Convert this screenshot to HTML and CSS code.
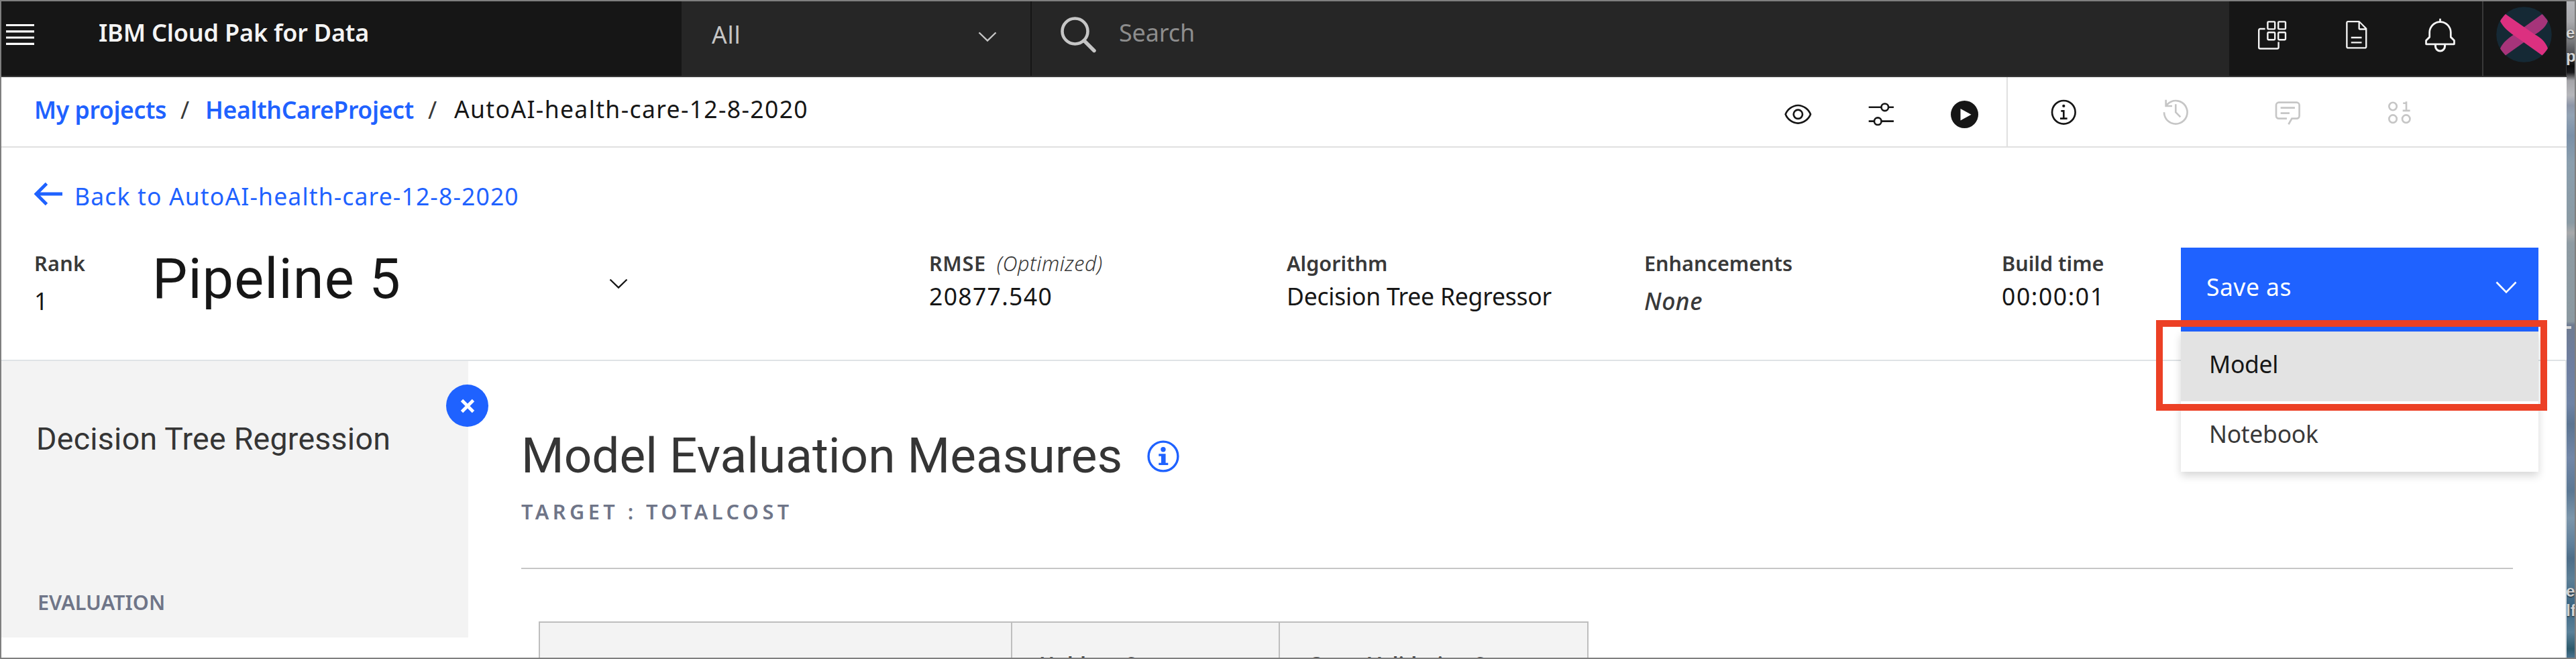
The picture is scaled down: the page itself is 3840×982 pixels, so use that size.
FILE: index.html
```html
<!DOCTYPE html>
<html lang="en">
<head>
<meta charset="utf-8">
<title>IBM Cloud Pak for Data</title>
<link rel="stylesheet" href="styles.css">
</head>
<body>
<div class="screen">
  <div class="window">
    <header class="topbar">
      <div class="brand">
        <svg class="hamburger" width="42" height="34" viewBox="0 0 42 34"><path d="M0 2.5h42M0 11.8h42M0 21h42M0 30.3h42" stroke="#fff" stroke-width="3.2"/></svg>
        <span class="brand-name">IBM Cloud Pak for Data</span>
      </div>
      <div class="scope">
        <span class="scope-label">All</span>
        <svg class="scope-chevron" width="28" height="16" viewBox="0 0 28 16"><path d="M1.5 1.5L14 13.5L26.5 1.5" fill="none" stroke="#c6c6c6" stroke-width="2.4"/></svg>
      </div>
      <div class="search">
        <svg class="search-icon" width="54" height="54" viewBox="0 0 54 54"><circle cx="21.5" cy="21.5" r="19" fill="none" stroke="#c6c6c6" stroke-width="4.6"/><path d="M35 35.5L50 50.5" stroke="#c6c6c6" stroke-width="5.4" stroke-linecap="round"/></svg>
        <span class="search-label">Search</span>
      </div>
      <div class="actions">
        <div class="action"><svg width="43" height="43" viewBox="0 0 43 43" fill="none" stroke="#f4f4f4" stroke-width="2.4"><path d="M10.6 12H3.2a2 2 0 0 0-2 2V39.5a2 2 0 0 0 2 2H28.6a2 2 0 0 0 2-2V31.5"/><rect x="14.4" y="1.4" width="10.8" height="11" rx="1.2"/><rect x="30.2" y="1.4" width="10.8" height="11" rx="1.2"/><rect x="14.4" y="17.2" width="10.8" height="11" rx="1.2"/><rect x="30.2" y="17.2" width="10.8" height="11" rx="1.2"/></svg></div>
        <div class="action"><svg width="47.6" height="47.6" viewBox="0 0 32 32" fill="#f4f4f4"><path d="M26.2 9.3l-7-7C19 2.1 18.8 2 18.5 2H7.5C6.4 2 5.5 2.9 5.5 4v24c0 1.1.9 2 2 2h17c1.1 0 2-.9 2-2V10c0-.3-.1-.5-.3-.7zM19.4 4.4l4.9 5.2h-4.9zM24.9 28.4H7.1V3.6h10.7v6c0 .9.7 1.6 1.6 1.6h5.5z"/><path d="M10.6 18h10.6v1.6H10.6zM10.6 23h10.6v1.6H10.6z"/></svg></div>
        <div class="action"><svg class="bell" width="55" height="55" viewBox="0 0 32 32" fill="#f4f4f4"><path d="M28.71 19.29L26 16.59V13a10 10 0 0 0-9.2-9.94V1h-1.6v2.06A10 10 0 0 0 6 13v3.59l-2.71 2.7A1 1 0 0 0 3 20v3a1 1 0 0 0 1 1h7v1a5 5 0 0 0 10 0v-1h7a1 1 0 0 0 1-1v-3a1 1 0 0 0-.29-.71zM19.2 25a3.2 3.2 0 0 1-6.4 0v-1h6.4zM27.4 22.4H4.6v-2l2.71-2.7A1 1 0 0 0 7.6 17v-4a8.4 8.4 0 0 1 16.8 0v4a1 1 0 0 0 .29.71l2.71 2.7z"/></svg></div>
      </div>
      <div class="account">
        <svg class="avatar" width="83" height="83" viewBox="0 0 83 83"><circle cx="41.5" cy="41.5" r="41.3" fill="#152935"/><path d="M68.5 11C71.5 14 74.5 17.5 77 21.5C74 30 67 36 57 42L14 72.5C11 69.5 8 66 6 62.3C10 53 18 47 27 41Z" fill="#a6347a"/><path d="M14 11C11 14 8 17.5 6 21.5C10 30 18 37 27 43L68.5 72.5C71.5 69.5 74.5 66 77 62C74 53 67 46 57 41Z" fill="#dc3080"/></svg>
      </div>
    </header>

    <nav class="crumbbar">
      <div class="crumbs">
        <a class="crumb link projects">My projects</a>
        <span class="slash">/</span>
        <a class="crumb link project">HealthCareProject</a>
        <span class="slash">/</span>
        <span class="crumb current">AutoAI-health-care-12-8-2020</span>
      </div>
      <div class="tools">
        <div class="tool"><svg class="low" width="42.6" height="42.6" viewBox="0 0 32 32"><path d="M30.94 15.66A16.69 16.69 0 0 0 16 5 16.69 16.69 0 0 0 1.06 15.66a1 1 0 0 0 0 .68A16.69 16.69 0 0 0 16 27 16.69 16.69 0 0 0 30.94 16.34a1 1 0 0 0 0-.68zM16 25c-5.3 0-10.9-3.93-12.93-9C5.1 10.93 10.7 7 16 7s10.9 3.93 12.93 9C26.9 21.07 21.3 25 16 25z"/><path d="M16 10a6 6 0 1 0 6 6 6 6 0 0 0-6-6zm0 10a4 4 0 1 1 4-4 4 4 0 0 1-4 4z"/></svg></div>
        <div class="tool"><svg class="low" width="42.6" height="42.6" viewBox="0 0 32 32" fill="none"><path d="M2 8.1h14M24.3 8.1H30M2 23.8h6M16.4 23.8H30" stroke="#161616" stroke-width="2"/><circle cx="20.1" cy="8.1" r="4" stroke="#161616" stroke-width="2"/><circle cx="12.2" cy="23.8" r="4" stroke="#161616" stroke-width="2"/></svg></div>
        <div class="tool"><svg class="low" width="41" height="41" viewBox="0 0 41 41"><circle cx="20.5" cy="20.5" r="20.5"/><path d="M14.5 12L30.5 20.7L14.5 29.5z" fill="#fff"/></svg></div>
      </div>
      <div class="panels">
        <div class="panel-tab"><svg width="42.6" height="42.6" viewBox="0 0 32 32"><path d="M17 22v-8.5h-4v2h2V22h-3v2h8v-2z"/><circle cx="16" cy="9" r="1.6"/><circle cx="16" cy="16" r="13" fill="none" stroke="#161616" stroke-width="2"/></svg></div>
        <div class="panel-tab"><svg class="off" width="42.6" height="42.6" viewBox="0 0 32 32"><path d="M20.59 22L15 16.41V7h2v8.58l5 5.01z"/><path d="M16 2A13.94 13.94 0 0 0 6 6.23V2H4v8h8V8H7.08A12 12 0 1 1 4 16H2A14 14 0 1 0 16 2z"/></svg></div>
        <div class="panel-tab"><svg class="off" width="42.6" height="42.6" viewBox="0 0 32 32"><path d="M17.74 30L16 29l4-7h6a2 2 0 0 0 2-2V8a2 2 0 0 0-2-2H6a2 2 0 0 0-2 2v12a2 2 0 0 0 2 2h9v2H6a4 4 0 0 1-4-4V8a4 4 0 0 1 4-4h20a4 4 0 0 1 4 4v12a4 4 0 0 1-4 4h-4.84z"/><path d="M8 10h16v2H8zM8 16h10v2H8z"/></svg></div>
        <div class="panel-tab"><svg class="off" width="42.6" height="42.6" viewBox="0 0 32 32"><g fill="none" stroke="#c6c6c6" stroke-width="2"><circle cx="8.3" cy="9.4" r="4.3"/><circle cx="8.3" cy="23.4" r="4.3"/><circle cx="23.1" cy="23.4" r="4.3"/></g><path d="M24.3 4v9.2h3.2v2h-8.2v-2h3V6.8h-2.6v-2h2.6V4z"/></svg></div>
      </div>
    </nav>

    <section class="summary">
      <a class="back">
        <svg width="42" height="34" viewBox="0 0 42 34"><path d="M18.5 1.5L3 17L18.5 32.5M3 17H42" fill="none" stroke="#1f62ff" stroke-width="4.8"/></svg>
        <span class="back-label">Back to AutoAI-health-care-12-8-2020</span>
      </a>
      <div class="metrics">
        <div class="metric"><div class="label rank-label">Rank</div><div class="value low-value">1</div></div>
        <div class="pipeline">
          <span class="pipeline-name">Pipeline 5</span>
          <svg class="pipeline-chevron" width="28" height="16" viewBox="0 0 28 16"><path d="M1.5 1.5L14 13.5L26.5 1.5" fill="none" stroke="#161616" stroke-width="2.4"/></svg>
        </div>
        <div class="metric"><div class="label rmse-label">RMSE<span class="note">(Optimized)</span></div><div class="value rmse-value">20877.540</div></div>
        <div class="metric"><div class="label">Algorithm</div><div class="value">Decision Tree Regressor</div></div>
        <div class="metric"><div class="label">Enhancements</div><div class="value low-value none">None</div></div>
        <div class="metric"><div class="label">Build time</div><div class="value time-value">00:00:01</div></div>
        <div class="save">
          <button class="save-button"><span>Save as</span><svg class="save-chevron" width="32" height="19" viewBox="0 0 32 19"><path d="M1.5 1.5L16 16.5L30.5 1.5" fill="none" stroke="#fff" stroke-width="2.6"/></svg></button>
          <div class="save-menu">
            <div class="save-item active">Model</div>
            <div class="save-item">Notebook</div>
          </div>
          <div class="highlight"></div>
        </div>
      </div>
    </section>

    <main class="body">
      <aside class="sidebar">
        <h2 class="side-title">Decision Tree Regression</h2>
        <div class="side-group">EVALUATION</div>
        <button class="close"><svg width="22" height="22" viewBox="0 0 22 22"><path d="M2.5 2.5L19.5 19.5M19.5 2.5L2.5 19.5" stroke="#fff" stroke-width="4.8"/></svg></button>
      </aside>
      <section class="content">
        <div class="heading">
          <h1 class="title">Model Evaluation Measures</h1>
          <svg class="title-info" width="48" height="48" viewBox="0 0 48 48" fill="#1f62ff"><circle cx="24" cy="24" r="21.9" fill="none" stroke="#1f62ff" stroke-width="3.4"/><circle cx="24" cy="13.7" r="3.7"/><path d="M17.3 20.3H27.6V33.7H31.3V37H17.3V33.7H21V23.7H17.3z"/></svg>
        </div>
        <div class="target">TARGET : TOTALCOST</div>
        <div class="rule"></div>
        <div class="scores">
          <div class="cell"></div>
          <div class="cell holdout">Holdout Score</div>
          <div class="cell cross">Cross Validation Score</div>
        </div>
      </section>
    </main>
  </div>
  <div class="desktop">
    <span class="desk-text d1">es</span>
    <span class="desk-text d2">py</span>
    <span class="dock"></span>
    <span class="desk-text d3">e</span>
    <span class="desk-text d4">lf</span>
  </div>
</div>
</body>
</html>
```
FILE: styles.css
```css
* { box-sizing: border-box; }
body { margin: 0; font-family: "Noto Sans", sans-serif; font-size: 35.5px; line-height: 40px; color: #161616; white-space: nowrap; }
svg { display: block; flex: none; }
h1, h2 { margin: 0; font-family: Roboto, sans-serif; font-weight: 400; }
button { margin: 0; border: 0; font: inherit; }

.screen { display: flex; width: 3840px; height: 982px; border: 2px solid #7f7f7f; overflow: hidden; background: #fff; }
.window { width: 3824px; flex: none; display: flex; flex-direction: column; }

/* Top bar */
.topbar { display: flex; height: 113px; flex: none; background: #161616; border-bottom: 2px solid #393939; border-right: 1px solid #393939; align-items: stretch; }
.brand { display: flex; align-items: flex-start; width: 1014px; padding-left: 7px; }
.hamburger { margin-top: 33px; }
.brand-name { margin: 27px 0 0 96px; font-size: 36px; font-weight: 600; letter-spacing: -.2px; color: #f4f4f4; }
.scope { display: flex; align-items: flex-start; width: 522px; padding-left: 45px; background: #262626; border-right: 2px solid #161616; color: #c6c6c6; }
.scope-label { width: 397px; margin-top: 29px; letter-spacing: .8px; }
.scope-chevron { margin-top: 45px; }
.search { display: flex; align-items: flex-start; flex: 1; padding-left: 43px; background: #262626; color: #8d8d8d; }
.search-icon { margin-top: 23px; }
.search-label { margin: 27px 0 0 33px; font-size: 36px; letter-spacing: -.16px; }
.actions { display: flex; width: 377px; padding-left: 2px; }
.action { display: flex; width: 125px; height: 100px; align-items: center; justify-content: center; }
.bell { margin-top: 2px; }
.account { width: 125px; padding: 8px 0 0 19px; border-left: 2px solid #393939; }

/* Breadcrumb bar */
.crumbbar { display: flex; height: 105px; flex: none; border-bottom: 2px solid #e0e0e0; }
.crumbs { display: flex; width: 2616px; padding: 28px 0 0 49px; }
.link { color: #1f62ff; font-weight: 600; }
.projects { width: 218px; letter-spacing: -.35px; }
.project { width: 332px; letter-spacing: -.3px; }
.slash { width: 37px; color: #393939; }
.slash + .current { padding-left: 2px; }
.current { letter-spacing: 1.37px; margin-top: -1px; }
.tools { display: flex; width: 373px; }
.tool, .panel-tab { display: flex; align-items: center; justify-content: center; width: 125px; height: 105px; fill: #161616; }
.low { margin-top: 5px; }
.panels { display: flex; border-left: 2px solid #e0e0e0; }
.panel-tab { width: 167px; height: 104px; }
.off { fill: #c6c6c6; }

/* Pipeline summary */
.summary { height: 318px; flex: none; padding: 52px 0 0 49px; border-bottom: 2px solid #dfe3e6; }
.back { display: flex; height: 40px; color: #1f62ff; }
.back-label { margin-left: 18px; letter-spacing: 1.15px; }
.metrics { display: grid; grid-template-columns: 176px 1158px 533px 533px 533px 267px 533px; margin-top: 57px; align-items: start; }
.metric { padding-top: 5px; }
.label { font-size: 30.6px; line-height: 36px; font-weight: 600; color: #393939; }
.rank-label { letter-spacing: .3px; }
.rmse-label { letter-spacing: .7px; }
.note { margin-left: 16px; font-weight: 300; font-style: italic; letter-spacing: .5px; }
.value { margin-top: 11px; letter-spacing: -.23px; }
.low-value { margin-top: 18px; }
.rmse-value { letter-spacing: 1.34px; }
.time-value { letter-spacing: 1.6px; }
.none { font-style: italic; font-weight: 500; letter-spacing: .5px; color: #393939; }
.pipeline { display: flex; align-items: flex-start; }
.pipeline-name { width: 681px; font-family: Roboto, sans-serif; font-size: 83px; line-height: 94px; letter-spacing: 1.04px; }
.pipeline-chevron { margin-top: 46px; }

.save { position: relative; }
.save-button { display: flex; justify-content: space-between; width: 533px; height: 125px; padding: 38px 32px 0 38px; background: #1f62ff; color: #fff; letter-spacing: .48px; align-items: flex-start; }
.save-chevron { margin-top: 12px; }
.save-menu { position: absolute; top: 125px; left: 0; width: 533px; background: #fff; box-shadow: 0 6px 12px rgba(0, 0, 0, .16); }
.save-item { height: 105px; padding: 28px 0 0 42px; color: #393939; letter-spacing: -.3px; }
.active { height: 104px; background: #e3e3e3; color: #161616; }
.highlight { position: absolute; top: 108px; left: -37px; width: 583px; height: 135px; border: 10px solid #ec4025; }

/* Evaluation body */
.body { display: flex; flex: 1; min-height: 0; border-right: 2px solid #dfe3e6; }
.sidebar { position: relative; width: 696px; height: 412px; padding: 88px 0 0 54px; background: #f3f3f3; }
.side-title { margin-left: -2px; font-size: 46.5px; line-height: 56px; letter-spacing: .25px; color: #353535; }
.side-group { margin-top: 197px; font-size: 30.6px; line-height: 36px; font-weight: 600; color: #6f7588; }
.close { position: absolute; top: 35px; right: -30px; display: flex; align-items: center; justify-content: center; width: 63px; height: 63px; padding: 0; border-radius: 50%; background: #1f62ff; }
.content { flex: 1; padding: 96px 78px 0 79px; }
.heading { display: flex; }
.title { width: 933px; font-size: 73px; line-height: 90px; color: #353535; }
.title-info { margin-top: 22px; }
.target { margin-top: 20px; font-size: 30.6px; line-height: 36px; font-weight: 600; letter-spacing: 5.5px; color: #6f7588; }
.rule { height: 2px; margin-top: 66px; background: #c6c6c6; }
.scores { display: grid; grid-template-columns: 704px 399px 460px; width: 1565px; height: 90px; margin: 78px 0 0 26px; border: 2px solid #bebebe; border-right: 0; background: #f3f3f3; }
.cell { padding-top: 43px; border-right: 2px solid #bebebe; font-size: 30.6px; line-height: 36px; font-weight: 600; color: #393939; }
.holdout { padding-left: 40px; }
.cross { padding-left: 42px; }

/* Desktop wallpaper beside the window */
.desktop { position: relative; flex: 1; overflow: hidden; background: linear-gradient(#b5b6ba 0, #a9a9ac 30px, #77787b 60px, #55565a 75px, #0b0b0c 96px, #1a1a1c 106px, #a5a5a9 118px, #b6b7bb 140px, #8d96a8 155px, #93a3b4 170px, #7a90a8 200px, #8b9fae 240px, #8a9aa4 330px, #a8a9ab 345px, #8e9ba3 360px, #8b99a1 477px, #6f7c92 482px, #6e7ea0 540px, #6f84a6 600px, #5c7592 630px, #7287a8 680px, #5b7894 730px, #7c96ab 770px, #5f7f9a 810px, #4d6d88 830px, #5d7f96 860px, #3c6683 900px, #5b8199 940px, #2c5a6c 965px, #4a7390 978px); }
.desk-text { position: absolute; left: -1px; font: 700 24px/28px "Liberation Sans", sans-serif; color: #d4d4d4; text-shadow: 0 1px 2px #222; }
.d1 { top: 33px; }
.d2 { top: 68px; }
.d3 { top: 865px; }
.d4 { top: 894px; }
.dock { position: absolute; top: 484px; left: 0; width: 7px; height: 4px; background: #d8d8d8; }
```
